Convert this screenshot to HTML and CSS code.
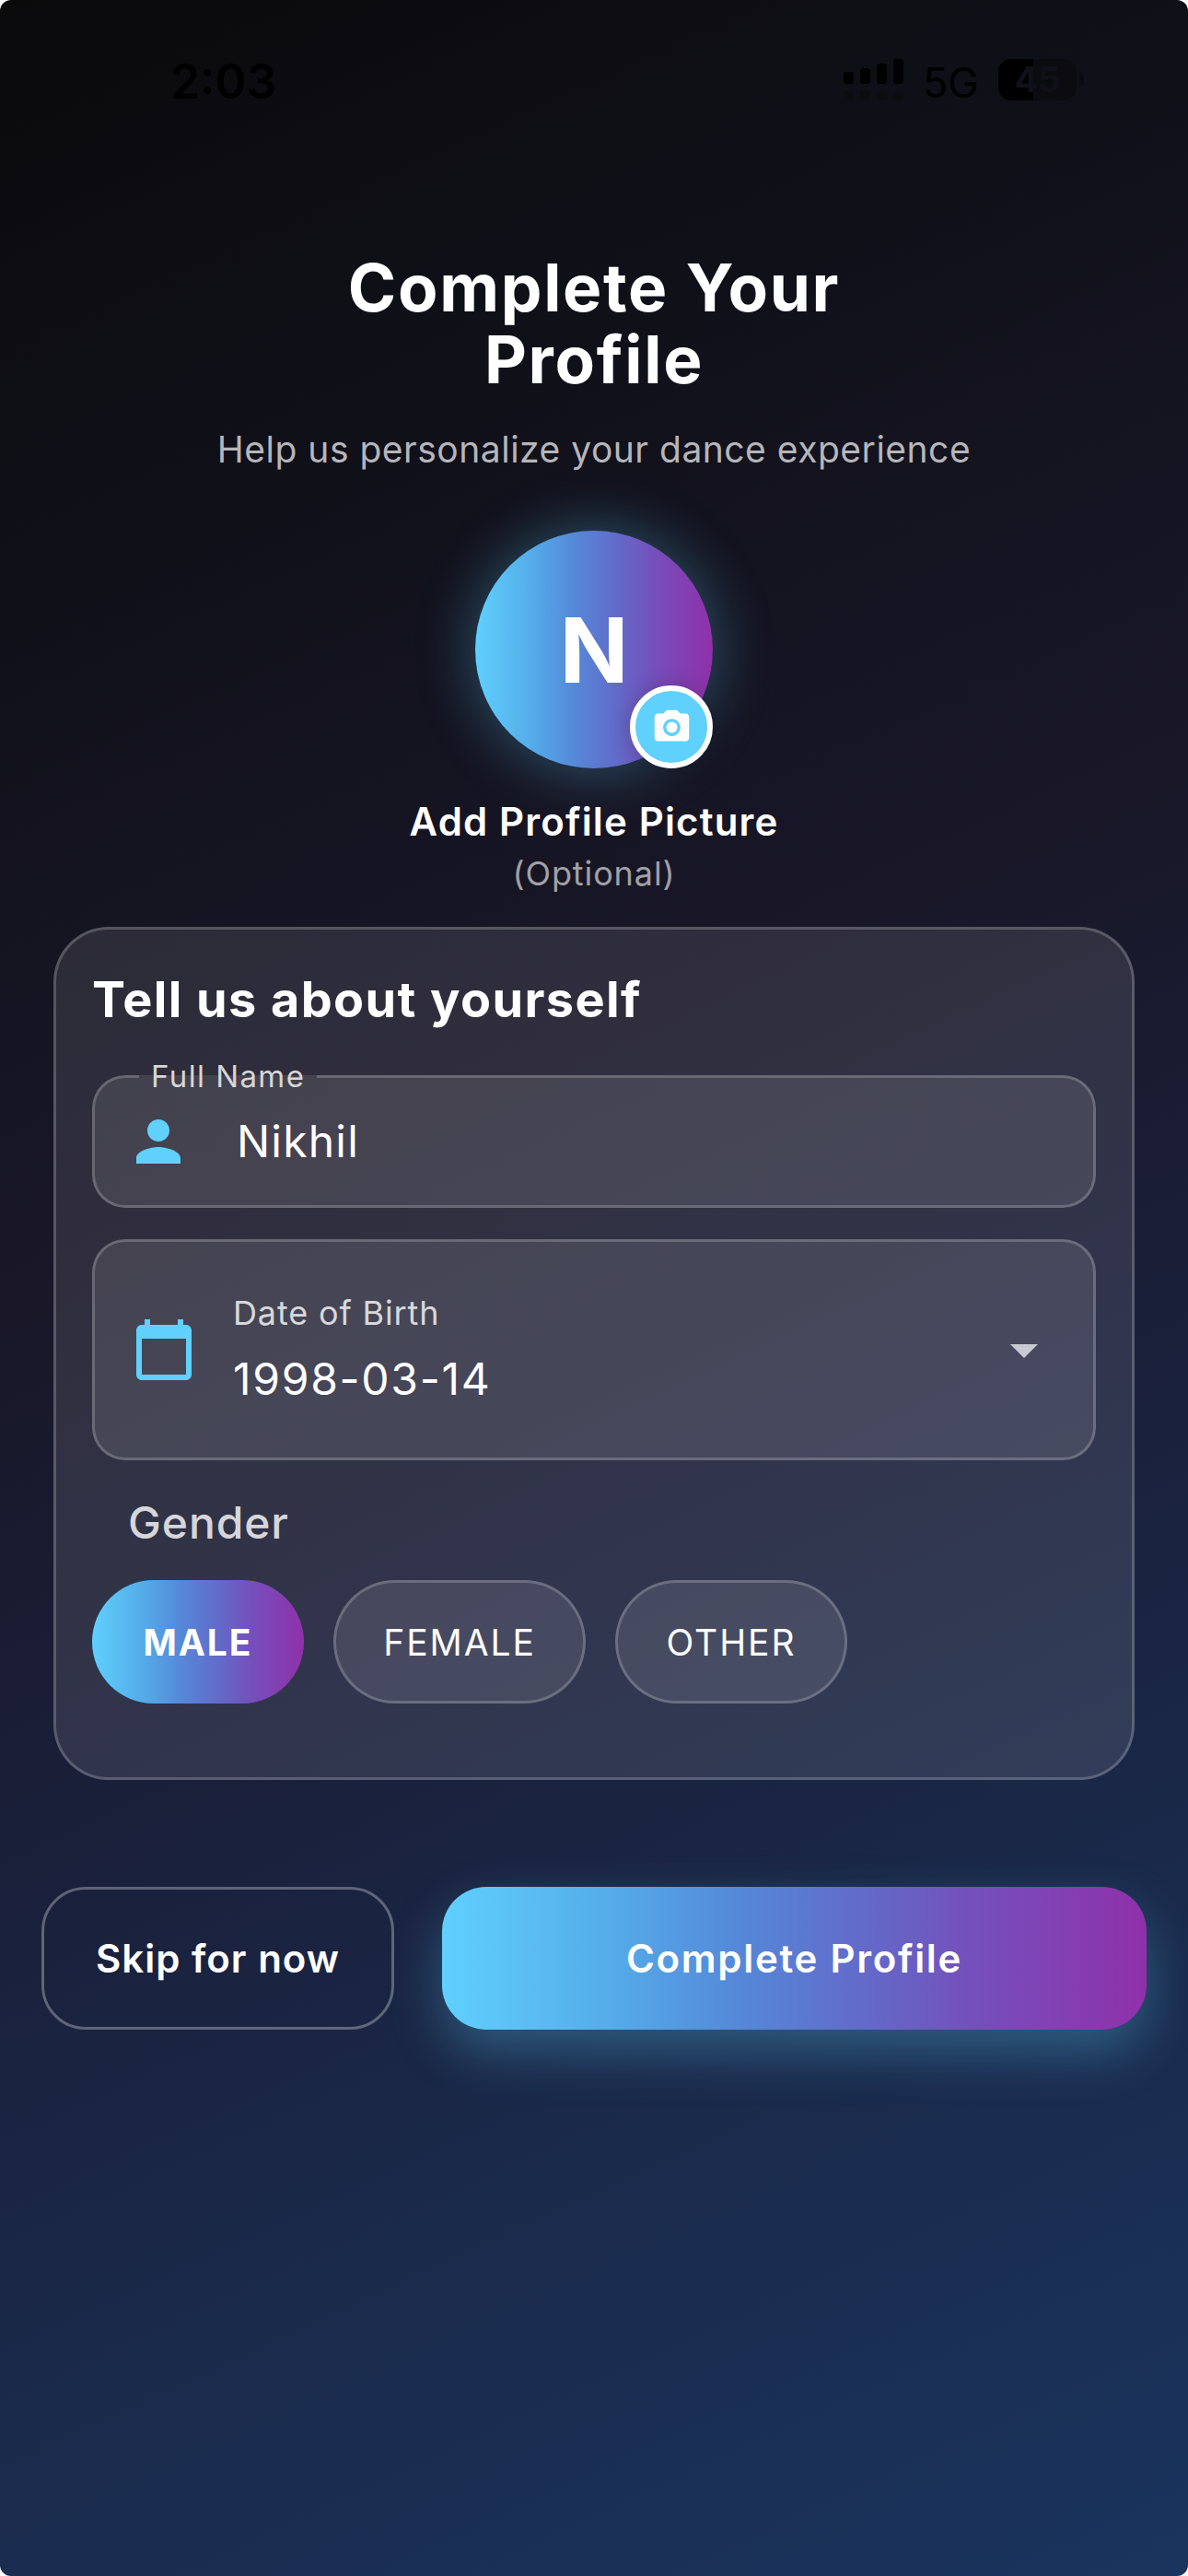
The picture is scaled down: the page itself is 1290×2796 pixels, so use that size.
FILE: index.html
```html
<!DOCTYPE html>
<html lang="en">
<head>
<meta charset="utf-8">
<title>Complete Your Profile</title>
<link rel="stylesheet" href="styles.css">
</head>
<body>
<div class="screen">
  <div class="status">
    <span class="time">2:03</span>
    <svg class="signal" width="66" height="46" viewBox="0 0 66 46">
      <g fill="#000"><rect x="0" y="14" width="11" height="13" rx="3.5"/><rect x="18" y="10" width="11" height="17" rx="3.5"/><rect x="36" y="5" width="11" height="22" rx="3.5"/><rect x="54" y="0" width="11" height="27" rx="3.5"/></g>
      <g fill="#0c0c11"><rect x="0" y="34" width="11" height="11" rx="3.5"/><rect x="18" y="34" width="11" height="11" rx="3.5"/><rect x="36" y="34" width="11" height="11" rx="3.5"/><rect x="54" y="34" width="11" height="11" rx="3.5"/></g>
    </svg>
    <span class="network">5G</span>
    <div class="battery"><span>45</span></div>
    <div class="battery-tip"></div>
  </div>

  <header class="intro">
    <h1>Complete Your<br>Profile</h1>
    <p>Help us personalize your dance experience</p>
  </header>

  <section class="picture">
    <div class="avatar">
      <span>N</span>
      <div class="camera">
        <svg width="45" height="45" viewBox="0 0 24 24" fill="#fff"><circle cx="12" cy="12" r="3.2"/><path d="M9 2 7.17 4H4c-1.1 0-2 .9-2 2v12c0 1.1.9 2 2 2h16c1.1 0 2-.9 2-2V6c0-1.1-.9-2-2-2h-3.17L15 2H9zm3 15c-2.76 0-5-2.24-5-5s2.24-5 5-5 5 2.24 5 5-2.24 5-5 5z"/></svg>
      </div>
    </div>
    <div class="add">Add Profile Picture</div>
    <div class="optional">(Optional)</div>
  </section>

  <main class="card">
    <h2>Tell us about yourself</h2>
    <fieldset class="name">
      <legend>Full Name</legend>
      <div class="name-row">
        <svg width="72" height="72" viewBox="0 0 24 24" fill="#60d0fd"><path d="M12 12c2.21 0 4-1.79 4-4s-1.79-4-4-4-4 1.79-4 4 1.79 4 4 4zm0 2c-2.67 0-8 1.34-8 4v2h16v-2c0-2.66-5.33-4-8-4z"/></svg>
        <span>Nikhil</span>
      </div>
    </fieldset>
    <div class="date">
      <svg width="72" height="72" viewBox="0 0 24 24" fill="#60d0fd"><path d="M20 3h-1V1h-2v2H7V1H5v2H4c-1.1 0-2 .9-2 2v16c0 1.1.9 2 2 2h16c1.1 0 2-.9 2-2V5c0-1.1-.9-2-2-2zm0 18H4V8h16v13z"/></svg>
      <div class="date-text">
        <div class="date-label">Date of Birth</div>
        <div class="date-value">1998-03-14</div>
      </div>
      <svg width="72" height="72" viewBox="0 0 24 24" fill="#c8cad0"><path d="m7 10 5 5 5-5z"/></svg>
    </div>
    <div class="gender">Gender</div>
    <div class="chips">
      <div class="chip male">MALE</div>
      <div class="chip female">FEMALE</div>
      <div class="chip other">OTHER</div>
    </div>
  </main>

  <footer class="actions">
    <div class="skip">Skip for now</div>
    <div class="complete">Complete Profile</div>
  </footer>
</div>
</body>
</html>
```
FILE: styles.css
```css
:root { --accent: linear-gradient(90deg, #60d0fd, #54aae8 25%, #5588d8 42%, #6468c8 61%, #7450bb 75%, #9030aa); }
* { box-sizing: border-box; }
body { margin: 0; background: #fff; font-family: Inter, "Liberation Sans", sans-serif; color: #fff; }
h1, h2, p { margin: 0; }
svg { display: block; flex: none; }
.screen {
  width: 1290px; height: 2796px; overflow: hidden; border-radius: 12px;
  background: linear-gradient(155.23deg, #0a0a0b 0%, #0f0f17 16%, #191728 42%, #1a203b 61%, #1a2b4d 80%, #1a345e 100%);
}
.status { height: 270px; padding: 64px 0 0 185px; display: flex; align-items: flex-start; color: #000; }
.time { width: 731px; font-size: 51.5px; line-height: 48px; font-weight: 600; }
.network { width: 102px; padding-left: 20px; font-size: 45px; line-height: 51px; }
.battery {
  width: 85px; height: 45px; border-radius: 14px; text-align: center; font-size: 38px; line-height: 45px;
  font-weight: 700; color: #101018; background: linear-gradient(90deg, #000 38px, #0b0b10 38px);
}
.battery-tip { width: 5px; height: 14px; margin: 15px 0 0 3px; border-radius: 0 6px 6px 0; background: #0b0b10; }

.intro { height: 306px; padding-top: 3px; text-align: center; }
h1 { font-size: 71px; line-height: 78px; font-weight: 700; letter-spacing: 1.7px; }
.intro p { margin-top: 35px; font-size: 39px; line-height: 47px; letter-spacing: .5px; color: #b6b6ba; }

.picture { height: 430px; display: flex; flex-direction: column; align-items: center; }
.avatar {
  position: relative; width: 258px; height: 258px; border-radius: 50%;
  display: flex; align-items: center; justify-content: center; font-size: 98px; font-weight: 700;
  background: var(--accent);
  box-shadow: 0 0 60px 6px rgba(96, 208, 253, .3);
}
.camera {
  position: absolute; right: 0; bottom: 0; width: 90px; height: 90px; border: 6px solid #fff; border-radius: 50%;
  background: #60d0fd; display: flex; align-items: center; justify-content: center; box-shadow: 0 0 24px rgba(0, 0, 0, .2);
}
.add { margin-top: 32px; font-size: 42px; line-height: 52px; font-weight: 600; letter-spacing: 1.15px; }
.optional { margin-top: 8px; font-size: 36px; line-height: 44px; letter-spacing: .9px; color: #a1a1a6; }

.card {
  width: 1174px; height: 926px; margin-left: 58px; padding: 46px 39px 0; border: 3px solid rgba(255, 255, 255, .2);
  border-radius: 60px; background: rgba(255, 255, 255, .1);
}
h2 { font-size: 54px; line-height: 60px; font-weight: 700; letter-spacing: 1.4px; }
.name {
  height: 162px; min-width: 0; margin: 34px 0 0; padding: 0; border: 3px solid rgba(255, 255, 255, .2);
  border-radius: 36px; background: rgba(255, 255, 255, .1);
}
.name legend { margin-left: 48px; padding: 1px 13px 2px; font-size: 33px; line-height: 36px; letter-spacing: 1.4px; color: #d6d6d9; }
.name-row { display: flex; align-items: center; gap: 49px; padding: 15px 0 0 33px; font-size: 48px; line-height: 72px; letter-spacing: 1.2px; }
.date {
  height: 240px; margin-top: 34px; padding: 0 39px; display: flex; align-items: center;
  border: 3px solid rgba(255, 255, 255, .2); border-radius: 36px; background: rgba(255, 255, 255, .1);
}
.date-text { flex: 1; padding-left: 39px; }
.date-label { margin-top: -2px; font-size: 36px; line-height: 44px; letter-spacing: .85px; color: #d8d8da; }
.date-value { margin-top: 21px; font-size: 48px; line-height: 58px; letter-spacing: 1.7px; }
.gender { margin: 39px 0 0 39px; font-size: 48px; line-height: 58px; font-weight: 500; letter-spacing: .9px; color: #d6d6da; }
.chips { display: flex; gap: 32px; margin-top: 33px; }
.chip {
  height: 134px; display: flex; align-items: center; justify-content: center; font-size: 39px; letter-spacing: 1.9px;
  border: 3px solid rgba(255, 255, 255, .2); border-radius: 67px; background: rgba(255, 255, 255, .1);
}
.male { width: 230px; border: 0; font-weight: 700; background: var(--accent); }
.female { width: 274px; }
.other { width: 252px; }

.actions { display: flex; margin: 116px 0 0 45px; gap: 52px; }
.skip, .complete { height: 155px; padding-bottom: 1px; border-radius: 48px; display: flex; align-items: center; justify-content: center; font-size: 42px; }
.skip { width: 383px; border: 3px solid rgba(255, 255, 255, .3); font-weight: 600; letter-spacing: 1px; }
.complete {
  width: 765px; font-weight: 600; letter-spacing: 1.7px; background: var(--accent);
  box-shadow: 0 24px 56px rgba(96, 208, 253, .3);
}
```
